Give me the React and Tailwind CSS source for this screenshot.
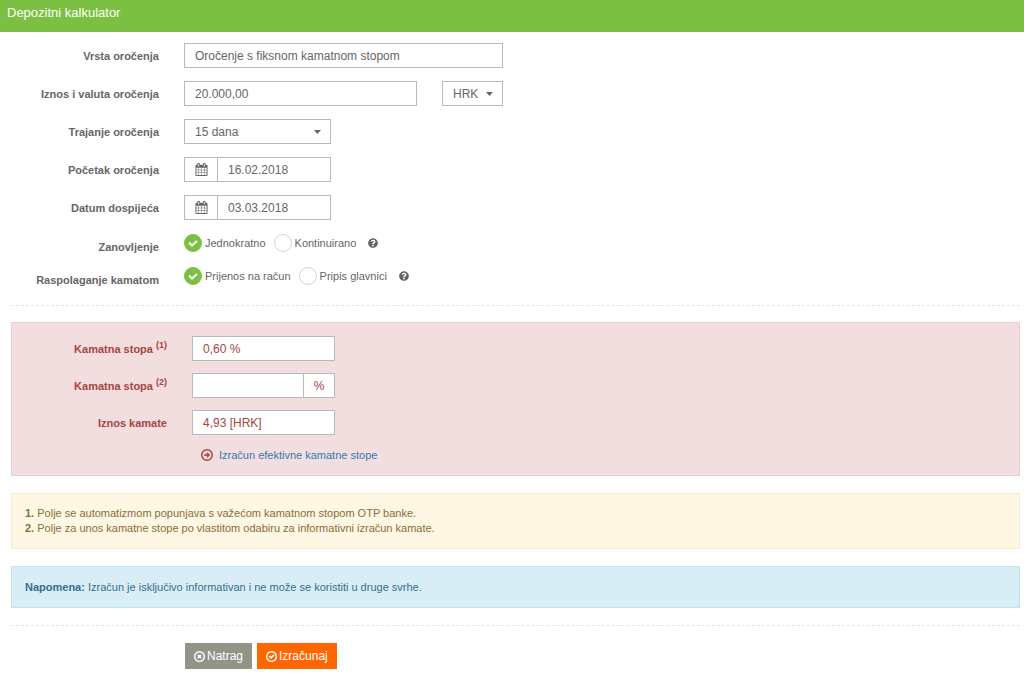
import { useState } from "react";
import { FaQuestionCircle } from "react-icons/fa";

const inputClass =
  "h-[25px] border border-[#b6b9c0] bg-white px-[10px] text-[12px] leading-4 outline-none";

// ICONS

const CalendarIcon = () => (
  <svg className="w-[13px] h-[13px]" viewBox="0 0 1792 1792" fill="currentColor">
    <path d="M192 1664h288v-288h-288v288zm352 0h320v-288h-320v288zm-352-352h288v-320h-288v320zm352 0h320v-320h-320v320zm-352-384h288v-288h-288v288zm736 736h320v-288h-320v288zm-384-736h320v-288h-320v288zm768 736h288v-288h-288v288zm-384-352h320v-320h-320v320zm-352-864v-288q0-13-9.5-22.5t-22.5-9.5h-64q-13 0-22.5 9.5t-9.5 22.5v288q0 13 9.5 22.5t22.5 9.5h64q13 0 22.5-9.5t9.5-22.5zm736 864h288v-320h-288v320zm-384-384h320v-288h-320v288zm384 0h288v-288h-288v288zm32-480v-288q0-13-9.5-22.5t-22.5-9.5h-64q-13 0-22.5 9.5t-9.5 22.5v288q0 13 9.5 22.5t22.5 9.5h64q13 0 22.5-9.5t9.5-22.5zm384-64v1280q0 52-38 90t-90 38h-1408q-52 0-90-38t-38-90v-1280q0-52 38-90t90-38h128v-96q0-66 47-113t113-47h64q66 0 113 47t47 113v96h384v-96q0-66 47-113t113-47h64q66 0 113 47t47 113v96h128q52 0 90 38t38 90z" />
  </svg>
);

const CircleIcon = ({ className, children }) => (
  <svg className={className} viewBox="0 0 48 48" fill="none" stroke="currentColor">
    <circle cx="24" cy="24" r="21" strokeWidth="6" />
    {children}
  </svg>
);

// FORM PARTS

const Row = ({ label, htmlFor, children }) => (
  <div className="flex items-center gap-[25px]">
    <label
      htmlFor={htmlFor}
      className="w-[148px] shrink-0 text-right text-[11px] leading-4 font-bold"
    >
      {label}
    </label>
    {children}
  </div>
);

const Select = ({ id, label, className, options }) => (
  <div className={`relative ${className}`}>
    <select
      id={id}
      aria-label={label}
      className={`${inputClass} block w-full appearance-none`}
    >
      {options.map((option) => (
        <option key={option}>{option}</option>
      ))}
    </select>
    <svg
      className="absolute right-[10px] top-[11px] w-[7px] h-1 pointer-events-none"
      viewBox="0 0 14 8"
      fill="currentColor"
    >
      <path d="M0 0h14L7 8z" />
    </svg>
  </div>
);

const DateField = ({ id, value }) => (
  <div className="flex w-[147px]">
    <button
      type="button"
      aria-label="Kalendar"
      className="flex w-[33px] h-[25px] items-center justify-center border border-[#b6b9c0] border-r-0"
    >
      <CalendarIcon />
    </button>
    <input
      id={id}
      type="text"
      defaultValue={value}
      className={`${inputClass} min-w-0 flex-1`}
    />
  </div>
);

const RadioRow = ({ label, name, options }) => {
  const [selected, setSelected] = useState(options[0]);
  return (
    <fieldset className="flex items-start gap-[25px]">
      <legend className="float-left w-[148px] shrink-0 pt-[5px] text-right text-[11px] leading-4 font-bold">
        {label}
      </legend>
      <div className="flex h-[18px] items-center gap-2 text-[11px] leading-4">
        {options.map((option) => (
          <label key={option} className="flex items-center gap-[3px]">
            <span className="grid">
              <input
                type="radio"
                name={name}
                checked={selected === option}
                onChange={() => setSelected(option)}
                className="col-start-1 row-start-1 w-[18px] h-[18px] appearance-none rounded-full border border-[#d6d4cf] checked:border-[#7bc043] checked:bg-[#7bc043]"
              />
              {selected === option && (
                <svg
                  className="col-start-1 row-start-1 w-[18px] h-[18px] pointer-events-none"
                  viewBox="0 0 36 36"
                  fill="none"
                  stroke="#fff"
                  strokeWidth="4"
                >
                  <path d="M10 17l6 6 10-9" />
                </svg>
              )}
            </span>
            {option}
          </label>
        ))}
        <FaQuestionCircle className="ml-1 w-[10px] h-[10px]" />
      </div>
    </fieldset>
  );
};

const App = () => {
  return (
    <div className="bg-white pb-[10px] font-['Liberation_Sans',Arial,sans-serif] text-[#666]">
      <h1 className="h-8 bg-[#7bc043] px-[7px] pt-1 text-[13px] leading-[18px] text-white">
        Depozitni kalkulator
      </h1>

      <form className="pl-[11px] pr-1 pt-[11px]" onSubmit={(e) => e.preventDefault()}>
        <div className="flex flex-col gap-[13px]">
          <Row label="Vrsta oročenja" htmlFor="vrsta">
            <input
              id="vrsta"
              type="text"
              defaultValue="Oročenje s fiksnom kamatnom stopom"
              className={`${inputClass} w-[319px]`}
            />
          </Row>
          <Row label="Iznos i valuta oročenja" htmlFor="iznos">
            <input
              id="iznos"
              type="text"
              defaultValue="20.000,00"
              className={`${inputClass} w-[233px]`}
            />
            <Select
              id="valuta"
              label="Valuta"
              className="w-[61px]"
              options={["HRK", "EUR", "USD"]}
            />
          </Row>
          <Row label="Trajanje oročenja" htmlFor="trajanje">
            <Select
              id="trajanje"
              className="w-[147px]"
              options={["15 dana", "1 mjesec", "3 mjeseca"]}
            />
          </Row>
          <Row label="Početak oročenja" htmlFor="pocetak">
            <DateField id="pocetak" value="16.02.2018" />
          </Row>
          <Row label="Datum dospijeća" htmlFor="dospijece">
            <DateField id="dospijece" value="03.03.2018" />
          </Row>
        </div>

        <div className="mt-[14px] flex flex-col gap-3">
          <RadioRow
            label="Zanovljenje"
            name="zanovljenje"
            options={["Jednokratno", "Kontinuirano"]}
          />
          <RadioRow
            label="Raspolaganje kamatom"
            name="raspolaganje"
            options={["Prijenos na račun", "Pripis glavnici"]}
          />
        </div>

        <hr className="mt-[17px] border-dashed border-[#e5e5e5]" />

        {/* RESULT */}
        <div className="mt-4 flex flex-col gap-3 border border-[#ebccd1] bg-[#f2dede] px-[7px] pt-[13px] pb-3 text-[#a94442]">
          <Row
            htmlFor="stopa1"
            label={
              <>
                Kamatna stopa <sup className="text-[9px]">(1)</sup>
              </>
            }
          >
            <input
              id="stopa1"
              type="text"
              defaultValue="0,60 %"
              className={`${inputClass} w-[143px]`}
            />
          </Row>
          <Row
            htmlFor="stopa2"
            label={
              <>
                Kamatna stopa <sup className="text-[9px]">(2)</sup>
              </>
            }
          >
            <div className="flex w-[143px]">
              <input id="stopa2" type="text" className={`${inputClass} min-w-0 flex-1`} />
              <span className="flex w-[31px] h-[25px] items-center justify-center border border-l-0 border-[#b6b9c0] bg-white text-[12px]">
                %
              </span>
            </div>
          </Row>
          <Row label="Iznos kamate" htmlFor="kamate">
            <input
              id="kamate"
              type="text"
              defaultValue="4,93 [HRK]"
              className={`${inputClass} w-[143px]`}
            />
          </Row>
          <div className="flex items-center gap-[6px] pl-[182px] text-[11px] leading-4">
            <CircleIcon className="w-3 h-3">
              <path d="M13 24h18" strokeWidth="7" />
              <path d="M24 15l9 9-9 9" strokeWidth="5" />
            </CircleIcon>
            <a href="#" className="text-[#337ab7]">
              Izračun efektivne kamatne stope
            </a>
          </div>
        </div>

        {/* NOTES */}
        <div className="mt-[17px] border border-[#faebcc] bg-[#fdf7e3] px-[13px] py-3 text-[11px] leading-[15px] text-[#8a6d3b]">
          <p>
            <b>1.</b> Polje se automatizmom popunjava s važećom kamatnom stopom OTP banke.
          </p>
          <p>
            <b>2.</b> Polje za unos kamatne stope po vlastitom odabiru za informativni izračun
            kamate.
          </p>
        </div>
        <div className="mt-[17px] border border-[#bce8f1] bg-[#d9edf7] px-[13px] py-3 text-[11px] leading-4 text-[#31708f]">
          <b>Napomena:</b> Izračun je isključivo informativan i ne može se koristiti u druge
          svrhe.
        </div>

        <hr className="mt-[17px] border-dashed border-[#e5e5e5]" />

        <div className="mt-[17px] flex gap-[5px] pl-[174px] text-[12px] leading-4 text-white">
          <button
            type="button"
            className="flex h-[26px] items-center gap-[2px] bg-[#939388] px-[9px]"
          >
            <CircleIcon className="w-[11px] h-[11px]">
              <path d="M17 17l14 14M31 17l-14 14" strokeWidth="7" />
            </CircleIcon>
            Natrag
          </button>
          <button
            type="submit"
            className="flex h-[26px] items-center gap-[2px] bg-[#ff6600] px-[9px]"
          >
            <CircleIcon className="w-[11px] h-[11px]">
              <path d="M14 22l8 8 13-13" strokeWidth="7" />
            </CircleIcon>
            Izračunaj
          </button>
        </div>
      </form>
    </div>
  );
};

export default App;
